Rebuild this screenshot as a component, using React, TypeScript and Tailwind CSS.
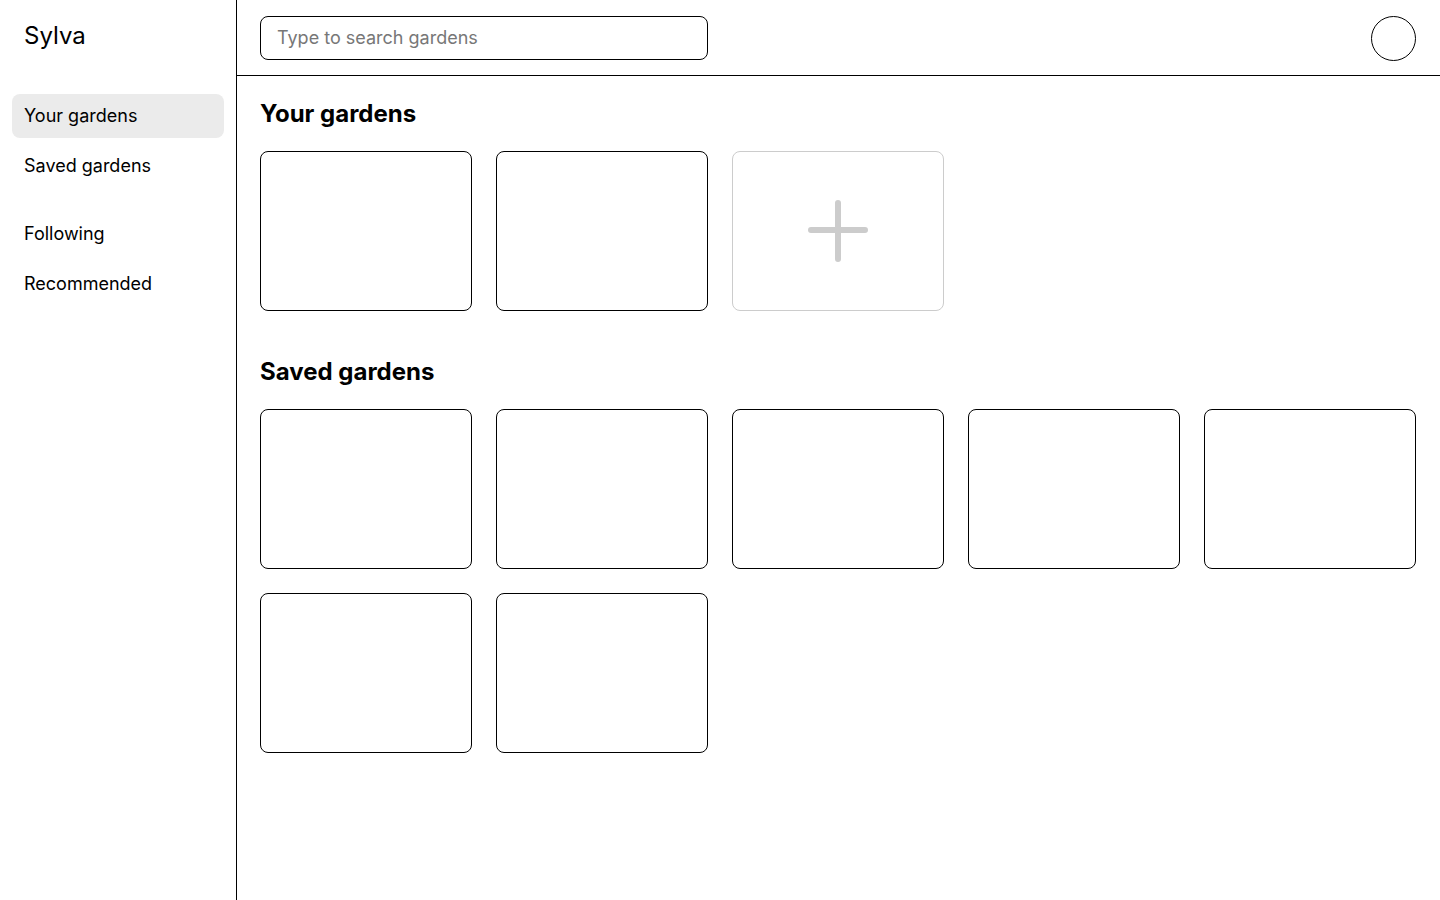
import React from "react";

const font = { fontFamily: "Inter, 'Noto Sans', sans-serif" };

function Card() {
  return <div className="h-[160px] w-[212px] rounded-[8px] border border-black bg-white" />;
}

export default function App() {
  return (
    <div className="flex h-[900px] w-[1440px] bg-white text-black" style={font}>
      <aside className="flex w-[237px] shrink-0 flex-col border-r border-black">
        <div className="flex h-[72px] items-center px-6 text-[24px] leading-none">Sylva</div>
        <nav className="mt-[22px] flex flex-col px-3">
          <div className="flex h-[44px] items-center rounded-[8px] bg-[#ebebeb] px-3 pb-[2px] text-[18px]">Your gardens</div>
          <div className="mt-[6px] flex h-[44px] items-center px-3 pb-[2px] text-[18px]">Saved gardens</div>
          <div className="mt-[24px] flex h-[44px] items-center px-3 pb-[2px] text-[18px]">Following</div>
          <div className="mt-[6px] flex h-[44px] items-center px-3 pb-[2px] text-[18px]">Recommended</div>
        </nav>
      </aside>
      <div className="flex flex-1 flex-col">
        <header className="flex h-[76px] items-start justify-between border-b border-black pl-[23px] pr-6 pt-4">
          <input
            className="h-[44px] w-[448px] rounded-[8px] border border-black px-4 pb-[2px] text-[18px] outline-none placeholder:text-[#777777]"
            placeholder="Type to search gardens"
            style={font}
          />
          <div className="h-[45px] w-[45px] rounded-full border border-black" />
        </header>
        <main className="flex flex-col pl-[23px] pt-6">
          <h2 className="text-[24px] font-bold leading-[28px]">Your gardens</h2>
          <div className="mt-[23px] flex gap-6">
            <Card />
            <Card />
            <div className="flex h-[160px] w-[212px] items-center justify-center rounded-[8px] border border-[#cccccc]">
              <svg width="60" height="62" viewBox="0 0 60 62">
                <path d="M30 3 V59 M3 30 H57" stroke="#cccccc" strokeWidth="6" strokeLinecap="round" fill="none" />
              </svg>
            </div>
          </div>
          <h2 className="mt-[47px] text-[24px] font-bold leading-[28px]">Saved gardens</h2>
          <div className="mt-[23px] grid w-[1156px] grid-cols-5 gap-6">
            {Array.from({ length: 7 }).map((_, i) => (
              <Card key={i} />
            ))}
          </div>
        </main>
      </div>
    </div>
  );
}
